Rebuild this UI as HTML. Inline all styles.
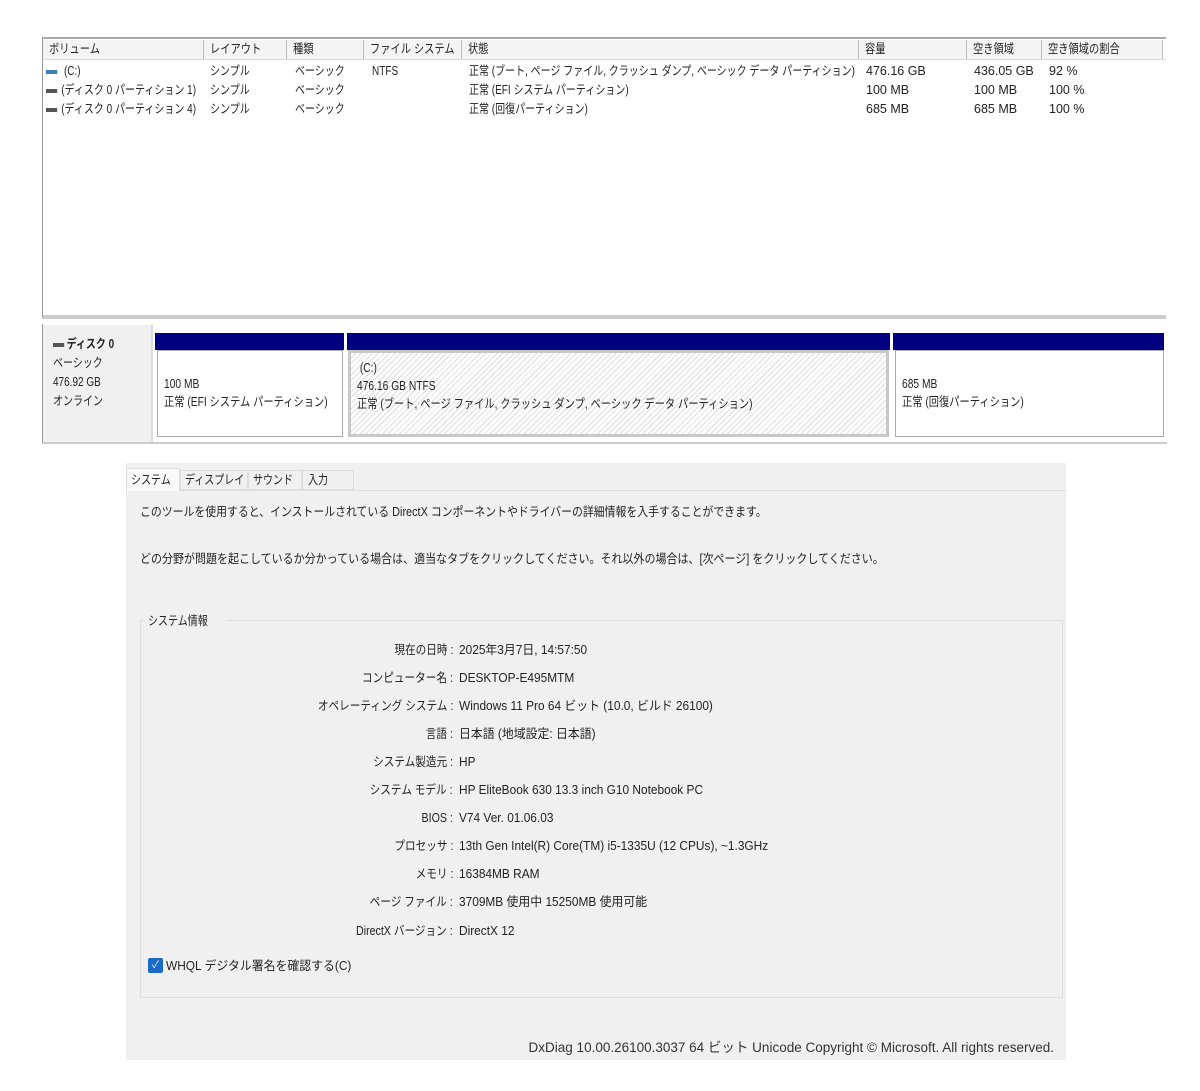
<!DOCTYPE html>
<html><head><meta charset="utf-8"><style>
*{margin:0;padding:0;box-sizing:border-box}
body{width:1200px;height:1091px;background:#fff;position:relative;overflow:hidden;font-family:"Liberation Sans","Noto Sans CJK JP",sans-serif;font-size:12.5px;line-height:16px;color:#222}
.a{position:absolute;white-space:nowrap;line-height:16px}
.t{transform:scaleX(.8);transform-origin:0 50%}
.hd{position:absolute;top:40px;height:19px;border-right:1px solid #bbb;background:#f4f4f4;padding-left:6px;line-height:19px;font-size:12.5px}
.hd span{display:inline-block;transform:scaleX(.82);transform-origin:0 50%;white-space:nowrap}
.ic{display:inline-block;width:14px;height:4px;background:#555;vertical-align:middle;margin-right:5px}
.blue{position:absolute;top:333px;height:17px;background:#000080}
.pb{position:absolute;top:350px;height:87px;border:1px solid #aaa;background:#fff;padding:22px 0 0 6px;line-height:18px;white-space:nowrap}
.pb div{transform:scaleX(.82);transform-origin:0 50%}
.lab{position:absolute;right:747px;white-space:nowrap;transform:scaleX(.85);transform-origin:100% 50%;line-height:16px}
.val{position:absolute;left:459px;white-space:nowrap;line-height:16px;transform:scaleX(.95);transform-origin:0 50%}
</style></head><body>
<div class="a" style="left:42px;top:37px;width:1124px;height:282px;border-left:1px solid #999;border-top:2px solid #aaa;border-bottom:4px solid #ccc"></div>
<div class="hd" style="left:43px;width:161px"><span>ボリューム</span></div>
<div class="hd" style="left:204px;width:83px"><span>レイアウト</span></div>
<div class="hd" style="left:287px;width:77px"><span>種類</span></div>
<div class="hd" style="left:364px;width:98px"><span>ファイル システム</span></div>
<div class="hd" style="left:462px;width:397px"><span>状態</span></div>
<div class="hd" style="left:859px;width:108px"><span>容量</span></div>
<div class="hd" style="left:967px;width:75px"><span>空き領域</span></div>
<div class="hd" style="left:1042px;width:121px"><span>空き領域の割合</span></div>
<div class="a" style="left:43px;top:59px;width:1123px;height:1px;background:#ddd"></div>
<div class="a t" style="left:46px;top:63px"><span class="ic" style="background:#3a7dbf"></span> (C:)</div>
<div class="a t" style="left:46px;top:82px"><span class="ic"></span>(ディスク 0 パーティション 1)</div>
<div class="a t" style="left:46px;top:101px"><span class="ic"></span>(ディスク 0 パーティション 4)</div>
<div class="a t" style="left:210px;top:63px">シンプル</div><div class="a t" style="left:210px;top:82px">シンプル</div><div class="a t" style="left:210px;top:101px">シンプル</div>
<div class="a t" style="left:295px;top:63px">ベーシック</div><div class="a t" style="left:295px;top:82px">ベーシック</div><div class="a t" style="left:295px;top:101px">ベーシック</div>
<div class="a t" style="left:372px;top:63px">NTFS</div>
<div class="a t" style="left:469px;top:63px">正常 (ブート, ページ ファイル, クラッシュ ダンプ, ベーシック データ パーティション)</div>
<div class="a t" style="left:469px;top:82px">正常 (EFI システム パーティション)</div>
<div class="a t" style="left:469px;top:101px">正常 (回復パーティション)</div>
<div class="a" style="left:866px;top:63px">476.16 GB</div><div class="a" style="left:866px;top:82px">100 MB</div><div class="a" style="left:866px;top:101px">685 MB</div>
<div class="a" style="left:974px;top:63px">436.05 GB</div><div class="a" style="left:974px;top:82px">100 MB</div><div class="a" style="left:974px;top:101px">685 MB</div>
<div class="a" style="left:1049px;top:63px">92 %</div><div class="a" style="left:1049px;top:82px">100 %</div><div class="a" style="left:1049px;top:101px">100 %</div>
<div class="a" style="left:42px;top:324px;width:1125px;height:120px;border-left:1px solid #999;border-bottom:2px solid #ccc"></div>
<div class="a" style="left:43px;top:325px;width:110px;height:117px;background:#f0f0f0;border-right:2px solid #ddd;padding:10px 0 0 10px;line-height:19px"><div class="t"><b><span class="ic" style="width:14px;margin-right:3px"></span>ディスク 0</b><br>ベーシック<br>476.92 GB<br>オンライン</div></div>
<div class="blue" style="left:155px;width:189px"></div>
<div class="blue" style="left:347px;width:543px"></div>
<div class="blue" style="left:893px;width:271px"></div>
<div class="pb" style="left:157px;width:186px;padding-top:24px"><div>100 MB<br>正常 (EFI システム パーティション)</div></div>
<div class="pb" style="left:348px;width:541px;padding-top:6px;border:3px solid #c8c8c8;background:repeating-linear-gradient(135deg,#fff 0 3px,#ddd 3px 4px)"><div>&nbsp;(C:)<br>476.16 GB NTFS<br>正常 (ブート, ページ ファイル, クラッシュ ダンプ, ベーシック データ パーティション)</div></div>
<div class="pb" style="left:895px;width:269px;padding-top:24px"><div>685 MB<br>正常 (回復パーティション)</div></div>
<div class="a" style="left:126px;top:463px;width:940px;height:597px;background:#f0f0f0"></div>
<div class="a" style="left:126px;top:490px;width:940px;height:1px;background:#ddd"></div>
<div class="a" style="left:126px;top:468px;width:54px;height:23px;background:#f9f9f9;border:1px solid #ddd;border-bottom:none;padding:3px 0 0 4px"><div class="t">システム</div></div>
<div class="a" style="left:180px;top:470px;width:68px;height:20px;border:1px solid #ddd;padding:1px 0 0 4px"><div class="t">ディスプレイ</div></div>
<div class="a" style="left:248px;top:470px;width:54px;height:20px;border:1px solid #ddd;padding:1px 0 0 4px"><div class="t">サウンド</div></div>
<div class="a" style="left:302px;top:470px;width:52px;height:20px;border:1px solid #ddd;padding:1px 0 0 5px"><div class="t">入力</div></div>
<div class="a" style="left:140px;top:504px;transform:scaleX(.87);transform-origin:0 50%">このツールを使用すると、インストールされている DirectX コンポーネントやドライバーの詳細情報を入手することができます。</div>
<div class="a" style="left:140px;top:551px;transform:scaleX(.88);transform-origin:0 50%">どの分野が問題を起こしているか分かっている場合は、適当なタブをクリックしてください。それ以外の場合は、[次ページ] をクリックしてください。</div>
<div class="a" style="left:140px;top:620px;width:923px;height:378px;border:1px solid #ddd"></div>
<div class="a" style="left:145px;top:613px;background:#f0f0f0;padding:0 3px"><div class="t">システム情報</div></div>
<div class="lab" style="top:642px">現在の日時 :</div><div class="val" style="top:642px">2025年3月7日, 14:57:50</div>
<div class="lab" style="top:670px">コンピューター名 :</div><div class="val" style="top:670px">DESKTOP-E495MTM</div>
<div class="lab" style="top:698px">オペレーティング システム :</div><div class="val" style="top:698px">Windows 11 Pro 64 ビット (10.0, ビルド 26100)</div>
<div class="lab" style="top:726px">言語 :</div><div class="val" style="top:726px">日本語 (地域設定: 日本語)</div>
<div class="lab" style="top:754px">システム製造元 :</div><div class="val" style="top:754px">HP</div>
<div class="lab" style="top:782px">システム モデル :</div><div class="val" style="top:782px">HP EliteBook 630 13.3 inch G10 Notebook PC</div>
<div class="lab" style="top:810px">BIOS :</div><div class="val" style="top:810px">V74 Ver. 01.06.03</div>
<div class="lab" style="top:838px">プロセッサ :</div><div class="val" style="top:838px">13th Gen Intel(R) Core(TM) i5-1335U (12 CPUs), ~1.3GHz</div>
<div class="lab" style="top:866px">メモリ :</div><div class="val" style="top:866px">16384MB RAM</div>
<div class="lab" style="top:894px">ページ ファイル :</div><div class="val" style="top:894px">3709MB 使用中 15250MB 使用可能</div>
<div class="lab" style="top:923px">DirectX バージョン :</div><div class="val" style="top:923px">DirectX 12</div>
<div class="a" style="left:148px;top:958px;width:15px;height:15px;background:#1b6ac9;border-radius:2px;color:#fff;font-size:10px;text-align:center;line-height:15px">✓</div>
<div class="a" style="left:166px;top:958px;transform:scaleX(.95);transform-origin:0 50%">WHQL デジタル署名を確認する(C)</div>
<div class="a" style="right:146px;top:1040px;color:#333;font-size:13.5px">DxDiag 10.00.26100.3037 64 ビット Unicode  Copyright © Microsoft. All rights reserved.</div>
</body></html>
